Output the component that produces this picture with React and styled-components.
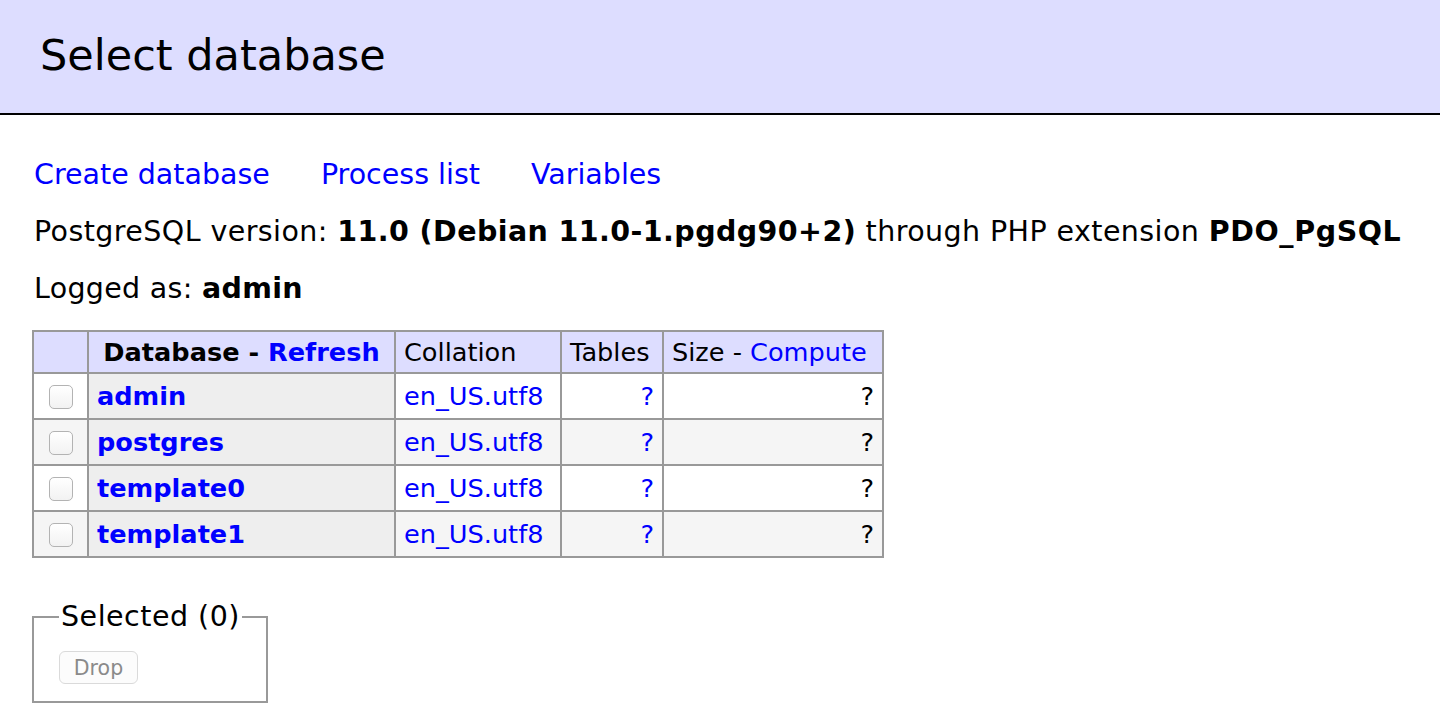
import styled, { createGlobalStyle } from "styled-components";

const databases = ["admin", "postgres", "template0", "template1"];

const GlobalStyle = createGlobalStyle`
  body {
    margin: 0;
    background: #fff;
    color: #000;
    font-family: "DejaVu Sans", Verdana, sans-serif;
    font-size: 28.5px;
    line-height: 36px;
  }
  a {
    color: #00f;
    text-decoration: none;
  }
`;

const App = () => {
  return (
    <>
      <GlobalStyle />
      <StTitle>Select database</StTitle>
      <StContent>
        <StLinks>
          <a href="#">Create database</a>
          <a href="#">Process list</a>
          <a href="#">Variables</a>
        </StLinks>
        <StPara $spacing={0.42}>
          PostgreSQL version: <b>11.0 (Debian 11.0-1.pgdg90+2)</b> through PHP
          extension <StWide>PDO_PgSQL</StWide>
        </StPara>
        <StPara $spacing={0.3}>
          Logged as: <b>admin</b>
        </StPara>

        <StTable>
          <thead>
            <tr>
              <StHeadCell $w={55}></StHeadCell>
              <StHeadCell as="th" $w={307} $center>
                Database - <a href="#">Refresh</a>
              </StHeadCell>
              <StHeadCell $w={166}>Collation</StHeadCell>
              <StHeadCell $w={102}>Tables</StHeadCell>
              <StHeadCell $w={220}>
                Size - <a href="#">Compute</a>
              </StHeadCell>
            </tr>
          </thead>
          <tbody>
            {databases.map((name, i) => (
              <tr key={name}>
                <StCell $odd={i % 2 === 1} $center>
                  <StCheck type="checkbox" />
                </StCell>
                <StNameCell>
                  <a href="#">{name}</a>
                </StNameCell>
                <StCell $odd={i % 2 === 1}>
                  <a href="#">en_US.utf8</a>
                </StCell>
                <StCell $odd={i % 2 === 1} $right>
                  <a href="#">?</a>
                </StCell>
                <StCell $odd={i % 2 === 1} $right>
                  ?
                </StCell>
              </tr>
            ))}
          </tbody>
        </StTable>

        <StFieldset>
          <StLegend>Selected (0)</StLegend>
          <StDrop disabled>Drop</StDrop>
        </StFieldset>
      </StContent>
    </>
  );
};

export default App;

const StTitle = styled.h2`
  margin: 0;
  padding: 28px 40px 31px;
  font-size: 43px;
  line-height: 54px;
  font-weight: normal;
  background: #ddf;
  border-bottom: 2px solid #000;
`;

const StContent = styled.div`
  padding: 42px 0 0 32px;
`;

const StLinks = styled.p`
  display: flex;
  gap: 51px;
  margin: 0;
  padding-left: 2px;
`;

const StPara = styled.p`
  margin: 21px 0 0;
  padding-left: 2px;
  letter-spacing: ${(p) => p.$spacing || 0}px;
`;

const StWide = styled.b`
  letter-spacing: 0.6px;
`;

const StTable = styled.table`
  margin-top: 23px;
  width: 852px;
  table-layout: fixed;
  border-collapse: separate;
  border-spacing: 0;
  border-top: 2px solid #999;
  border-left: 2px solid #999;
  font-size: 25.6px;

  th,
  td {
    box-sizing: border-box;
    border-right: 2px solid #999;
    border-bottom: 2px solid #999;
    padding: 0 8px;
    white-space: nowrap;
  }
`;

const StHeadCell = styled.td`
  width: ${(p) => p.$w}px;
  height: 42px;
  line-height: 40px;
  background: #ddf;
  font-weight: ${(p) => (p.as === "th" ? "bold" : "normal")};
  text-align: ${(p) => (p.$center ? "center" : "left")};
`;

const StCell = styled.td`
  height: 46px;
  line-height: 44px;
  background: ${(p) => (p.$odd ? "#f5f5f5" : "#fff")};
  text-align: ${(p) => (p.$right ? "right" : p.$center ? "center" : "left")};
`;

const StNameCell = styled.th`
  height: 46px;
  line-height: 44px;
  background: #eee;
  text-align: left;
  font-weight: bold;
`;

const StCheck = styled.input`
  appearance: none;
  display: inline-block;
  vertical-align: middle;
  width: 24px;
  height: 24px;
  margin: 0 0 2px;
  border: 1px solid #b3b3b3;
  border-radius: 5px;
  background: linear-gradient(#fff, #f2f2f2);
`;

const StFieldset = styled.fieldset`
  box-sizing: border-box;
  width: 236px;
  margin: 41px 0 0;
  padding: 16px 24px 17px 25px;
  border: 2px solid #999;
  min-inline-size: 0;
`;

const StLegend = styled.legend`
  padding: 0 2px;
  font-size: 28.5px;
  line-height: 36px;
  letter-spacing: 0.5px;
`;

const StDrop = styled.button`
  display: block;
  width: 79px;
  height: 33px;
  padding: 0;
  font-family: "DejaVu Sans", Verdana, sans-serif;
  font-size: 20.5px;
  color: #8a8a8a;
  background: #fcfcfc;
  border: 1px solid #dadada;
  border-radius: 6px;
`;
